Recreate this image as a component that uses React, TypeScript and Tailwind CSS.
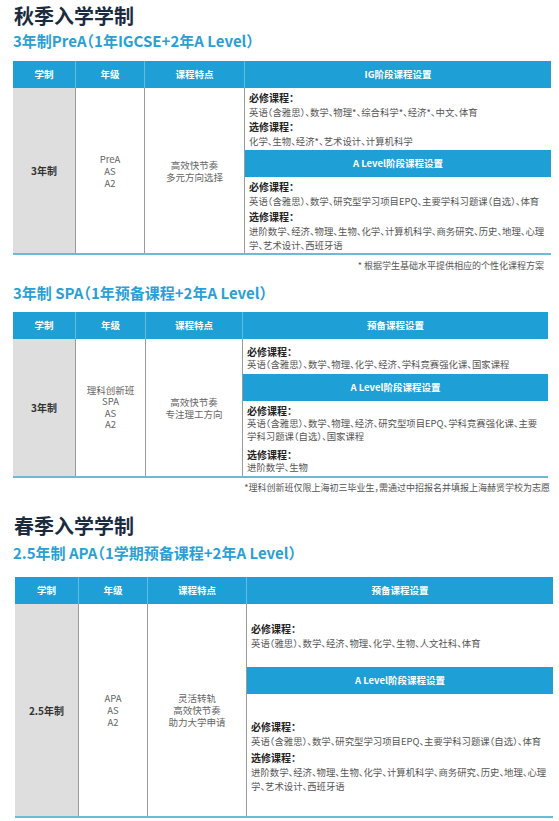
const font = { fontFamily: '"Noto Sans CJK SC", "Noto Sans", sans-serif', fontFeatureSettings: '"halt"' };

type Group = { label: string; lines: string[] };
type Section = { title: string; groups: Group[]; pt: string; h: string; gap: string; lh: string };

type TableProps = {
  wrap: string;
  cols: string;
  bodyH: string;
  system: string;
  grades: string[];
  gradeLh: string;
  features: string[];
  sections: Section[];
};

function CourseTable({ wrap, cols, bodyH, system, grades, gradeLh, features, sections }: TableProps) {
  const [first, ...rest] = sections;
  return (
    <div className={wrap}>
      <div className={`grid ${cols} h-[27px] bg-[#1ea0d6] text-[9.5px] font-bold text-white`}>
        <div className="flex items-center justify-center border-r border-white/30">学制</div>
        <div className="flex items-center justify-center border-r border-white/30">年级</div>
        <div className="flex items-center justify-center border-r border-white/30">课程特点</div>
        <div className="flex items-center justify-center">{first.title}</div>
      </div>
      <div className={`grid ${cols} ${bodyH} border-b-2 border-[#6bbad8]`}>
        <div className="flex items-center justify-center border-r border-[#9a9a9a] bg-[#dedede] text-[10px] font-bold text-[#333]">
          {system}
        </div>
        <div className={`flex flex-col items-center justify-center border-r border-[#9a9a9a] text-[9.5px] ${gradeLh} text-[#666]`}>
          {grades.map((g) => (
            <span key={g}>{g}</span>
          ))}
        </div>
        <div className="flex flex-col items-center justify-center border-r border-[#9a9a9a] text-[9.5px] leading-[12px] text-[#666]">
          {features.map((f) => (
            <span key={f}>{f}</span>
          ))}
        </div>
        <div className="flex min-w-0 flex-col">
          <SectionBody s={first} />
          {rest.map((s) => (
            <div key={s.title} className="flex flex-col">
              <div className="flex h-[27px] items-center justify-center bg-[#1ea0d6] text-[9.5px] font-bold text-white">
                {s.title}
              </div>
              <SectionBody s={s} />
            </div>
          ))}
        </div>
      </div>
    </div>
  );
}

function SectionBody({ s }: { s: Section }) {
  return (
    <div className={`flex flex-col ${s.gap} ${s.pt} ${s.h} pl-[4px] text-[9.4px] ${s.lh}`}>
      {s.groups.map((g) => (
        <div key={g.label}>
          <div className="text-[10px] font-bold text-[#222]">{g.label}</div>
          {g.lines.map((l) => (
            <div key={l} className="whitespace-nowrap text-[#555]">
              {l}
            </div>
          ))}
        </div>
      ))}
    </div>
  );
}

export default function App() {
  return (
    <div className="min-h-[821px] w-[559px] bg-white pt-[4px]" style={font}>
      <h1 className="pl-[14px] text-[20px] font-bold leading-[24px] text-[#1c2b3e]">秋季入学学制</h1>
      <h2 className="mt-[4px] pl-[13px] text-[15px] font-bold leading-[18px] text-[#2a9fd6]">
        3年制PreA（1年IGCSE+2年A Level）
      </h2>

      <CourseTable
        wrap="ml-[13px] mt-[11px] w-[538px]"
        cols="grid-cols-[63px_69px_100px_1fr]"
        bodyH="h-[167px]"
        system="3年制"
        grades={["PreA", "AS", "A2"]}
        gradeLh="leading-[12px]"
        features={["高效快节奏", "多元方向选择"]}
        sections={[
          {
            title: "IG阶段课程设置",
            pt: "pt-[3px]",
            h: "h-[62px]",
            gap: "gap-[1px]",
            lh: "leading-[14px]",
            groups: [
              { label: "必修课程：", lines: ["英语（含雅思）、数学、物理*、综合科学*、经济*、中文、体育"] },
              { label: "选修课程：", lines: ["化学、生物、经济*、艺术设计、计算机科学"] },
            ],
          },
          {
            title: "A Level阶段课程设置",
            pt: "pt-[3px]",
            h: "h-[76px]",
            gap: "gap-[2px]",
            lh: "leading-[14px]",
            groups: [
              { label: "必修课程：", lines: ["英语（含雅思）、数学、研究型学习项目EPQ、主要学科习题课（自选）、体育"] },
              { label: "选修课程：", lines: ["进阶数学、经济、物理、生物、化学、计算机科学、商务研究、历史、地理、心理", "学、艺术设计、西班牙语"] },
            ],
          },
        ]}
      />
      <p className="mt-[4px] w-[544px] text-right text-[9px] leading-[14px] text-[#555]">
        * 根据学生基础水平提供相应的个性化课程方案
      </p>

      <h2 className="mt-[11px] pl-[13px] text-[15px] font-bold leading-[18px] text-[#2a9fd6]">
        3年制 SPA（1年预备课程+2年A Level）
      </h2>

      <CourseTable
        wrap="ml-[13px] mt-[10px] w-[535px]"
        cols="grid-cols-[63px_70px_97px_1fr]"
        bodyH="h-[139px]"
        system="3年制"
        grades={["理科创新班", "SPA", "AS", "A2"]}
        gradeLh="leading-[11.5px]"
        features={["高效快节奏", "专注理工方向"]}
        sections={[
          {
            title: "预备课程设置",
            pt: "pt-[6px]",
            h: "h-[35px]",
            gap: "gap-[0px]",
            lh: "leading-[13px]",
            groups: [{ label: "必修课程：", lines: ["英语（含雅思）、数学、物理、化学、经济、学科竞赛强化课、国家课程"] }],
          },
          {
            title: "A Level阶段课程设置",
            pt: "pt-[3px]",
            h: "h-[75px]",
            gap: "gap-[5px]",
            lh: "leading-[13px]",
            groups: [
              { label: "必修课程：", lines: ["英语（含雅思）、数学、物理、经济、研究型项目EPQ、学科竞赛强化课、主要", "学科习题课（自选）、国家课程"] },
              { label: "选修课程：", lines: ["进阶数学、生物"] },
            ],
          },
        ]}
      />
      <p className="mt-[3px] w-[550px] text-right text-[9px] leading-[14px] text-[#555]">
        *理科创新班仅限上海初三毕业生，需通过中招报名并填报上海赫贤学校为志愿
      </p>

      <h1 className="mt-[19px] pl-[14px] text-[20px] font-bold leading-[24px] text-[#1c2b3e]">春季入学学制</h1>
      <h2 className="mt-[6px] pl-[13px] text-[15px] font-bold leading-[18px] text-[#2a9fd6]">
        2.5年制 APA（1学期预备课程+2年A Level）
      </h2>

      <CourseTable
        wrap="ml-[15px] mt-[15px] w-[538px]"
        cols="grid-cols-[64px_69px_99px_1fr]"
        bodyH="h-[214px]"
        system="2.5年制"
        grades={["APA", "AS", "A2"]}
        gradeLh="leading-[12px]"
        features={["灵活转轨", "高效快节奏", "助力大学申请"]}
        sections={[
          {
            title: "预备课程设置",
            pt: "pt-[18px]",
            h: "h-[63px]",
            gap: "gap-[0px]",
            lh: "leading-[14px]",
            groups: [{ label: "必修课程：", lines: ["英语（雅思）、数学、经济、物理、化学、生物、人文社科、体育"] }],
          },
          {
            title: "A Level阶段课程设置",
            pt: "pt-[26px]",
            h: "h-[122px]",
            gap: "gap-[3px]",
            lh: "leading-[14px]",
            groups: [
              { label: "必修课程：", lines: ["英语（含雅思）、数学、研究型学习项目EPQ、主要学科习题课（自选）、体育"] },
              { label: "选修课程：", lines: ["进阶数学、经济、物理、生物、化学、计算机科学、商务研究、历史、地理、心理", "学、艺术设计、西班牙语"] },
            ],
          },
        ]}
      />
    </div>
  );
}
